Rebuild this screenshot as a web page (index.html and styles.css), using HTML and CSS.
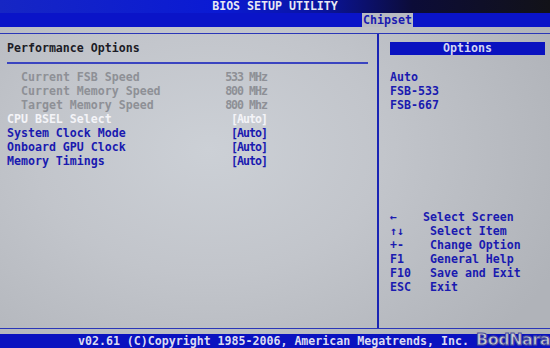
FILE: index.html
```html
<!DOCTYPE html>
<html>
<head>
<meta charset="utf-8">
<link rel="stylesheet" href="styles.css">
</head>
<body>
<div class="screen">
  <div class="titlebar">BIOS SETUP UTILITY</div>
  <div class="tabs"><span class="tab">Chipset</span></div>
  <div class="main">
    <div class="frame">
      <div class="left">
        <div class="heading">Performance Options</div>
        <div class="rows">
          <div class="row dim"><span class="name">Current FSB Speed</span><span class="val">533 MHz</span></div>
          <div class="row dim"><span class="name">Current Memory Speed</span><span class="val">800 MHz</span></div>
          <div class="row dim"><span class="name">Target Memory Speed</span><span class="val">800 Mhz</span></div>
          <div class="row sel"><span class="name">CPU BSEL Select</span><span class="val">[Auto]</span></div>
          <div class="row"><span class="name">System Clock Mode</span><span class="val">[Auto]</span></div>
          <div class="row"><span class="name">Onboard GPU Clock</span><span class="val">[Auto]</span></div>
          <div class="row"><span class="name">Memory Timings</span><span class="val">[Auto]</span></div>
        </div>
      </div>
      <div class="right">
        <div class="opthead">Options</div>
        <div class="opts">
          <div>Auto</div>
          <div>FSB-533</div>
          <div>FSB-667</div>
        </div>
        <div class="help">
          <div class="hrow first"><span class="key">←</span><span class="desc">Select Screen</span></div>
          <div class="hrow"><span class="key">↑↓</span><span class="desc">Select Item</span></div>
          <div class="hrow"><span class="key">+-</span><span class="desc">Change Option</span></div>
          <div class="hrow"><span class="key">F1</span><span class="desc">General Help</span></div>
          <div class="hrow"><span class="key">F10</span><span class="desc">Save and Exit</span></div>
          <div class="hrow"><span class="key">ESC</span><span class="desc">Exit</span></div>
        </div>
      </div>
    </div>
  </div>
  <div class="footer">v02.61 (C)Copyright 1985-2006, American Megatrends, Inc.</div>
  <div class="watermark">BodNara</div>
</div>
</body>
</html>
```
FILE: styles.css
```css
html, body {
  margin: 0;
  padding: 0;
}
body {
  width: 550px;
  height: 348px;
  overflow: hidden;
  background: #0a12c0;
}
.screen {
  position: relative;
  width: 550px;
  height: 348px;
  display: flex;
  flex-direction: column;
  font-family: "DejaVu Sans Mono", "Liberation Mono", monospace;
  font-weight: bold;
  font-size: 11.6px;
  line-height: 14px;
}
.titlebar {
  height: 13px;
  line-height: 13px;
  text-align: center;
  color: #e8e8f4;
  background: linear-gradient(90deg, #1626c4 0%, #0a1ad4 40%, #0a14a0 58%, #0c0c38 75%, #121218 100%);
}
.tabs {
  height: 14px;
  background: #0a14c8;
  padding-left: 362px;
  display: flex;
  align-items: flex-start;
}
.tab {
  display: block;
  height: 15px;
  line-height: 15px;
  padding: 0 1px;
  background: #b8bbc2;
  color: #1a1ab0;
}
.main {
  flex: 1;
  padding-top: 6px;
  padding-bottom: 5px;
  background: radial-gradient(ellipse 70% 90% at 38% 40%, #ccd0d6 0%, #c2c5cb 45%, #b0b3b9 100%);
  display: flex;
  flex-direction: column;
}
.frame {
  flex: 1;
  border-top: 1px solid #2a36b8;
  border-bottom: 1px solid #2a36b8;
  display: grid;
  grid-template-columns: 379px 1fr;
}
.left {
  padding: 7px 9px 0 7px;
  border-right: 2px solid #1a24b4;
}
.heading {
  color: #1c1c26;
  padding-bottom: 7px;
  border-bottom: 2px solid #3a44c0;
}
.rows {
  padding-top: 6px;
}
.row {
  display: flex;
  color: #1a1ab0;
}
.row .name {
  flex: none;
  width: 218px;
}
.row.dim {
  color: #8e9096;
}
.row.dim .name {
  padding-left: 14px;
  width: 204px;
}
.row.sel {
  color: #f4f4f8;
}
.row .val {
  width: 42px;
  text-align: right;
  letter-spacing: -1px;
  white-space: nowrap;
}
.right {
  padding: 8px 5px 34px 11px;
  display: flex;
  flex-direction: column;
  color: #1a1ab0;
}
.opthead {
  height: 13px;
  line-height: 13px;
  background: #0a12c0;
  color: #d4d6f2;
  text-align: center;
}
.opts {
  margin-top: 15px;
}
.help {
  margin-top: auto;
}
.hrow {
  display: flex;
}
.hrow .key {
  width: 40px;
  flex: none;
}
.hrow.first .key {
  width: 33px;
}
.footer {
  height: 14px;
  line-height: 15px;
  background: #0a12c0;
  color: #dcdcf2;
  padding-left: 78px;
  white-space: nowrap;
}
.watermark {
  position: absolute;
  right: 0;
  bottom: 0;
  font-family: "DejaVu Sans", sans-serif;
  font-weight: bold;
  font-size: 16px;
  line-height: 16px;
  letter-spacing: -0.5px;
  color: #c8cad2;
  -webkit-text-stroke: 1px #4a4e9a;
}
```
